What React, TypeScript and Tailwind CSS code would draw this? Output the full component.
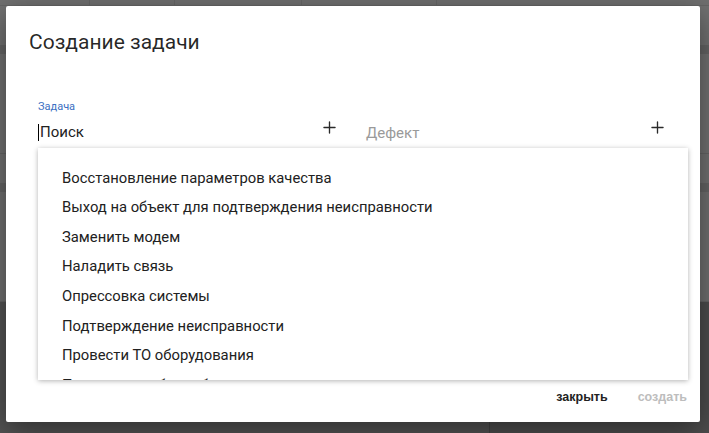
import { Plus } from "lucide-react";

const tasks = [
  "Восстановление параметров качества",
  "Выход на объект для подтверждения неисправности",
  "Заменить модем",
  "Наладить связь",
  "Опрессовка системы",
  "Подтверждение неисправности",
  "Провести ТО оборудования",
  "Проверить работу оборудования",
];

const Backdrop = () => (
  <div className="absolute inset-0 flex flex-col bg-[#525252]">
    <div className="flex h-[6px] border-b border-[#666] bg-[#707070]">
      <div className="w-[90px] border-r border-[#666]" />
      <div className="w-[85px] border-r border-[#666]" />
      <div className="w-[127px] border-r border-[#666]" />
      <div className="w-[135px] border-r border-[#666]" />
      <div className="flex-1" />
    </div>
    <div className="h-[40px] border-b border-[#666] bg-[#727272]" />
    <div className="h-[8px] bg-[#666]" />
    <div className="h-[100px] border-b border-[#666] bg-[#727272]" />
    <div className="h-[30px] border-b border-[#666] bg-[#727272]" />
    <div className="h-[8px] bg-[#666]" />
    <div className="h-[110px] border-b border-[#666] bg-[#717171]" />
    <div className="flex flex-1">
      <div className="w-[490px] border-r border-[#444] bg-[#545454]" />
      <div className="flex-1 bg-[#4e4e4e]" />
    </div>
  </div>
);

export default function App() {
  return (
    <div className="relative h-[433px] w-[709px] overflow-hidden font-['Roboto','Liberation_Sans',sans-serif]">
      <Backdrop />
      <div className="absolute left-[6px] top-[6px] flex h-[416px] w-[694px] flex-col rounded-[2px] bg-white shadow-[0_8px_30px_rgba(0,0,0,0.45)]">
        <h2 className="pl-[23px] pt-[21px] text-[21px] leading-[30px] text-black/85">Создание задачи</h2>

        <div className="relative mt-[43px] flex pl-[32px] pr-[30px]">
          <div className="flex w-[300px] items-end">
            <div className="flex-1">
              <div className="text-[11px] leading-[14px] text-[#3b6fc2]">Задача</div>
              <div className="mt-[8px] flex items-center text-[15px] leading-[20px] text-[#222]">
                <span className="mr-[1px] h-[17px] w-px bg-black" />
                Поиск
              </div>
            </div>
            <Plus size={19} strokeWidth={1.7} className="mb-[5px] mr-[-1px] text-[#2a2a2a]" />
          </div>
          <div className="ml-[18px] flex flex-1 items-end">
            <div className="mb-[-1px] flex-1 pl-[10px] text-[15px] leading-[20px] text-[#9a9a9a]">Дефект</div>
            <Plus size={19} strokeWidth={1.7} className="mb-[5px] mr-[3px] text-[#2a2a2a]" />
          </div>

          <div className="absolute left-[32px] top-[48px] h-[232px] w-[650px] overflow-hidden bg-white pt-[15px] shadow-[0_1px_5px_rgba(0,0,0,0.3)]">
            {tasks.map((t) => (
              <div key={t} className="flex h-[29.6px] items-center pl-[24px] text-[14.8px] text-[#212121]">
                {t}
              </div>
            ))}
          </div>
        </div>

        <div className="mt-auto flex justify-end gap-[30px] pb-[15px] pr-[13px] font-['Liberation_Sans',sans-serif] text-[12.5px] font-bold">
          <span className="text-[#222]">закрыть</span>
          <span className="text-[#bdbdbd]">создать</span>
        </div>
      </div>
    </div>
  );
}
